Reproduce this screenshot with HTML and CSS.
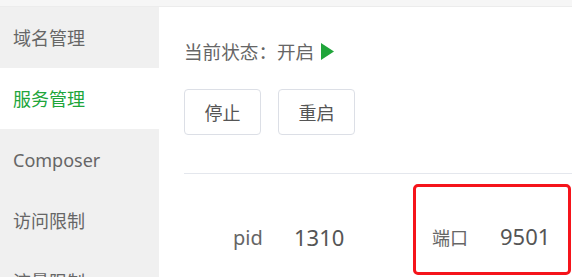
FILE: index.html
```html
<!DOCTYPE html>
<html lang="zh-CN">
<head>
<meta charset="utf-8">
<title>服务管理</title>
<link rel="stylesheet" href="styles.css">
</head>
<body>
<div class="topbar"></div>
<div class="main">
  <nav class="sidebar">
    <div class="nav-item">域名管理</div>
    <div class="nav-item active">服务管理</div>
    <div class="nav-item">Composer</div>
    <div class="nav-item">访问限制</div>
    <div class="nav-item">流量限制</div>
  </nav>
  <section class="content">
    <div class="status">当前状态：开启<svg class="play" width="13" height="17" viewBox="0 0 13 17"><polygon points="0,0 13,8.5 0,17" fill="#20a53a"/></svg></div>
    <div class="buttons">
      <button class="btn">停止</button>
      <button class="btn">重启</button>
    </div>
    <div class="divider"></div>
    <div class="info-row">
      <span class="label">pid</span>
      <span class="value">1310</span>
      <div class="highlight">
        <span class="label-sm">端口</span>
        <span class="value">9501</span>
      </div>
    </div>
  </section>
</div>
</body>
</html>
```
FILE: styles.css
```css
* { box-sizing: border-box; }
html, body { margin: 0; padding: 0; }
body {
  width: 572px;
  height: 277px;
  overflow: hidden;
  background: #fff;
  font-family: "Noto Sans", "Noto Sans CJK SC", sans-serif;
  color: #666;
}
.topbar {
  height: 7px;
  background: #f6f6f6;
  border-bottom: 1px solid #ececec;
}
.main {
  display: flex;
  height: 270px;
  overflow: hidden;
}
.sidebar {
  width: 159px;
  flex: none;
  background: #f0f0f0;
}
.nav-item {
  height: 61px;
  padding: 3px 0 0 13px;
  line-height: 56px;
  font-size: 18px;
  color: #666;
  white-space: nowrap;
}
.nav-item.active {
  background: #fff;
  color: #20a53a;
}
.content {
  flex: 1;
  padding: 32px 0 0 25px;
  min-width: 0;
}
.status {
  height: 26px;
  line-height: 26px;
  font-size: 18.6px;
  color: #666;
  display: flex;
  align-items: center;
  white-space: nowrap;
}
.play {
  margin-left: 7px;
  margin-top: -1px;
}
.buttons {
  display: flex;
  gap: 17px;
  margin-top: 24px;
}
.btn {
  width: 77px;
  height: 46px;
  border: 1px solid #dcdfe6;
  border-radius: 4px;
  background: #fff;
  font-family: inherit;
  font-size: 18px;
  color: #555;
  padding: 0;
}
.divider {
  margin-top: 38px;
  height: 1px;
  background: #e4e7ed;
}
.info-row {
  display: flex;
  align-items: flex-start;
  margin-top: 10px;
  padding-left: 49px;
  white-space: nowrap;
}
.label {
  width: 61px;
  margin-top: 40px;
  line-height: 28px;
  font-size: 20px;
  color: #666;
}
.value {
  line-height: 28px;
  font-size: 22px;
  color: #555;
}
.info-row > .value {
  width: 119px;
  margin-top: 39px;
}
.highlight {
  flex: none;
  width: 158px;
  height: 91px;
  border: 3px solid #f5141b;
  border-radius: 5px;
  padding: 37px 0 0 16px;
  display: flex;
  align-items: flex-start;
  gap: 32px;
}
.label-sm {
  line-height: 28px;
  font-size: 18px;
  color: #666;
}
.highlight .value { margin-top: -2px; }
```
